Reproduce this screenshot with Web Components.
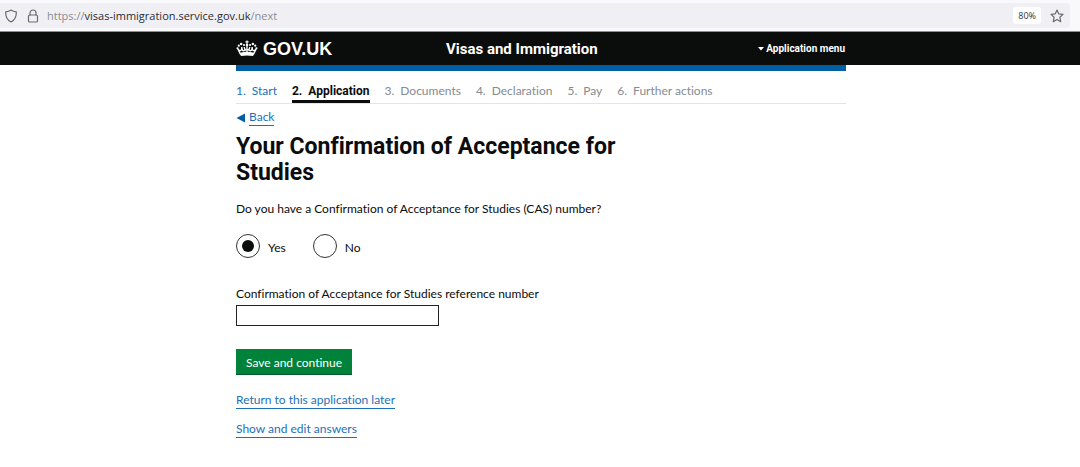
<!DOCTYPE html>
<html lang="en">
<head>
<meta charset="utf-8">
<title>Visas and Immigration - GOV.UK</title>
<style>
body{margin:0;background:#fff;color:#0b0c0c;font:12px/16px Lato,"Liberation Sans",sans-serif;font-variant-ligatures:none;--link:#1d70b8;--shell:610px;--strong:Roboto,"Liberation Sans",sans-serif}
</style>
</head>
<body>
<address-bar zoom="80%"></address-bar>
<gov-header service="Visas and Immigration"></gov-header>
<page-shell>
  <step-nav>
    <step-item number="1." state="done">Start</step-item>
    <step-item number="2." state="current">Application</step-item>
    <step-item number="3.">Documents</step-item>
    <step-item number="4.">Declaration</step-item>
    <step-item number="5.">Pay</step-item>
    <step-item number="6.">Further actions</step-item>
  </step-nav>
  <text-link arrow>Back</text-link>
  <page-title>Your Confirmation of Acceptance for Studies</page-title>
  <cas-form></cas-form>
</page-shell>
<script>
const define = (name, html, setup) => customElements.define(name, class extends HTMLElement {
  connectedCallback() {
    if (this.shadowRoot) return;
    const t = document.createElement('template');
    t.innerHTML = '<style>:host,*{box-sizing:border-box}</style>' + html;
    const root = this.attachShadow({mode: 'open'});
    root.append(t.content.cloneNode(true));
    if (setup) setup(this, root);
  }
});

define('address-bar', `
<style>
:host{display:block;background:#f9f9fb;padding:3px 10px 3px 0;border-bottom:1px solid #8f8f92;font:12px/16px "Open Sans","Noto Sans",sans-serif}
.bar{display:flex;align-items:center;height:25px;background:#f0f0f4;border-radius:0 4px 4px 0;padding:0 6px 0 4px}
svg{flex:none;fill:none;stroke:#6a6a70;stroke-width:1.2;stroke-linejoin:round;stroke-linecap:round}
.lock{margin-left:8px}
.url{flex:1;margin-left:7px;color:#8c8c92;font-size:11px}
b{font-weight:400;color:#2b2b33}
.zoom{background:#fff;border-radius:3px;padding:0 5px;font-size:9px;line-height:17px;color:#333;margin-right:9px}
</style>
<div class="bar">
<svg width="14" height="14" viewBox="0 0 14 14"><path d="M7 1 C5.5 2.2 3.6 2.7 1.7 2.8 C1.4 7.7 3 11 7 13 C11 11 12.6 7.7 12.3 2.8 C10.4 2.7 8.5 2.2 7 1Z"/></svg>
<svg class="lock" width="14" height="14" viewBox="0 0 14 14"><rect x="2.5" y="6" width="9" height="7" rx="1.3"/><path d="M4 6V4a3 3 0 0 1 6 0v2"/></svg>
<span class="url">https://<b>visas-immigration.service.gov.uk</b>/next</span>
<span class="zoom"></span>
<svg width="14" height="14" viewBox="0 0 14 14"><path d="M7 1 L8.8 4.9 L13 5.4 L9.9 8.3 L10.7 12.7 L7 10.6 L3.3 12.7 L4.1 8.3 L1 5.4 L5.2 4.9Z"/></svg>
</div>`, (el, r) => r.querySelector('.zoom').textContent = el.getAttribute('zoom'));

define('gov-header', `
<style>
:host{display:block;background:#0b0c0c;color:#fff;font-family:var(--strong)}
.inner{max-width:calc(var(--shell) + 2px);margin:0 auto;padding:0 1px 0 2px;height:33px;display:grid;grid-template-columns:210px 1fr auto;align-items:center}
a{color:inherit;text-decoration:none}
.logo{display:flex;align-items:center;gap:5px;font:700 18px/24px "Liberation Sans",sans-serif}
.service{font-size:15px;line-height:20px;font-weight:700}
button{all:unset;display:flex;align-items:center;gap:2px;font-size:10px;line-height:16px;font-weight:700}
</style>
<div class="inner">
<a class="logo" href="#"><svg width="22" height="17" viewBox="0 0 23 18" fill="#fff"><path d="M11.5 .5v4M9.8 2h3.4" stroke="#fff" stroke-width="1.2"/><circle cx="11.5" cy="5.3" r="1.4"/><circle cx="8.3" cy="5.3" r="1.1"/><circle cx="14.7" cy="5.3" r="1.1"/><circle cx="5.3" cy="4.3" r="1.3"/><circle cx="17.7" cy="4.3" r="1.3"/><circle cx="2.8" cy="6" r="1.2"/><circle cx="20.2" cy="6" r="1.2"/><circle cx="1.5" cy="8.8" r="1.2"/><circle cx="21.5" cy="8.8" r="1.2"/><g fill="none" stroke="#fff" stroke-width="1.4"><path d="M1.8 9.5 L4.8 15.5 M21.2 9.5 L18.2 15.5 M2.2 10 Q6 13.5 6 7.5 Q6.3 12.5 9 11 Q9.8 9.5 8.3 7.5 M20.8 10 Q17 13.5 17 7.5 Q16.7 12.5 14 11 Q13.2 9.5 14.7 7.5 M11.5 6v7 M9 11 Q11.5 9.5 14 11"/></g><path d="M4.2 13.4 Q11.5 11.7 18.8 13.4 L18 17 Q11.5 15.6 5 17Z"/></svg><span>GOV.UK</span></a>
<a class="service" href="#"></a>
<button type="button"><svg width="6" height="4" viewBox="0 0 6 4" fill="#fff"><path d="M0 0h6L3 3.5Z"/></svg><span>Application menu</span></button>
</div>`, (el, r) => r.querySelector('.service').textContent = el.getAttribute('service'));

define('page-shell', `
<style>
:host{display:block;max-width:calc(var(--shell) + 2px);margin:0 auto;padding:0 0 24px 2px}
.rule{height:6px;background:#005ea5}
</style>
<div class="rule"></div><main><slot></slot></main>`);

define('step-nav', `
<style>
:host{display:block;border-bottom:1px solid #e3e4e5;padding-top:10px;margin-bottom:5px}
nav{display:flex;flex-wrap:wrap;gap:0 15px}
</style><nav aria-label="Progress"><slot></slot></nav>`);

define('step-item', `
<style>
:host{display:block;color:#868b8f;border-bottom:3px solid transparent;padding:2px 0 1px}
:host([state=done]){color:var(--link)}
:host([state=current]){color:#0b0c0c;font-family:var(--strong);font-weight:700;border-color:#0b0c0c}
a{display:flex;gap:6px;color:inherit;text-decoration:none}
</style><a><span class="n"></span><span><slot></slot></span></a>`, (el, r) => {
  r.querySelector('.n').textContent = el.getAttribute('number');
  if (el.getAttribute('state') === 'done') r.querySelector('a').href = '#start';
});

define('text-link', `
<style>
:host{display:flex;align-items:center;gap:4px;color:var(--link)}
svg{display:none}
:host([arrow]) svg{display:block}
a{color:inherit;text-decoration:none;border-bottom:1px solid}
</style><svg width="9" height="10" viewBox="0 0 9 10" fill="#005ea5"><path d="M9 .5v9L.5 5Z"/></svg><a href="#"><slot></slot></a>`);

define('page-title', `
<style>
:host{display:block;max-width:400px;margin-top:8px}
h1{margin:0;font-family:var(--strong);font-size:23px;line-height:26px;font-weight:700}
</style><h1><slot></slot></h1>`);

define('cas-form', `
<style>
:host{display:block;margin-top:15px}
fieldset{border:0;margin:0;padding:0;min-width:0}
legend{padding:0}
.radios{display:flex;gap:27px;margin-top:17px}
.radios label{display:flex;align-items:center;gap:8px}
.radios span{padding-top:4px}
input[type=radio]{appearance:none;width:24px;height:24px;margin:0;border:1px solid #333;border-radius:50%;display:grid;place-items:center;background:#fff}
input[type=radio]:checked::before{content:"";width:12px;height:12px;border-radius:50%;background:#0b0c0c}
.field{display:flex;flex-direction:column;gap:3px;margin-top:28px}
input[type=text]{width:203px;height:21px;border:1px solid #222;border-radius:0;background:#fff;margin:0;padding:2px 4px;font:inherit}
button{display:block;margin:23px 0 17px;height:26px;border:0;border-bottom:1px solid #00592a;background:#00823b;color:#fff;padding:2px 10px 0;font:inherit;font-variant-ligatures:none}
.links{display:grid;gap:12px}
</style>
<form>
<fieldset><legend>Do you have a Confirmation of Acceptance for Studies (CAS) number?</legend>
<div class="radios"><label><input type="radio" name="cas" checked><span>Yes</span></label><label><input type="radio" name="cas"><span>No</span></label></div></fieldset>
<div class="field"><label for="ref">Confirmation of Acceptance for Studies reference number</label><input type="text" id="ref"></div>
<button type="button">Save and continue</button>
<div class="links"><text-link>Return to this application later</text-link><text-link>Show and edit answers</text-link></div>
</form>`);
</script>
</body>
</html>
